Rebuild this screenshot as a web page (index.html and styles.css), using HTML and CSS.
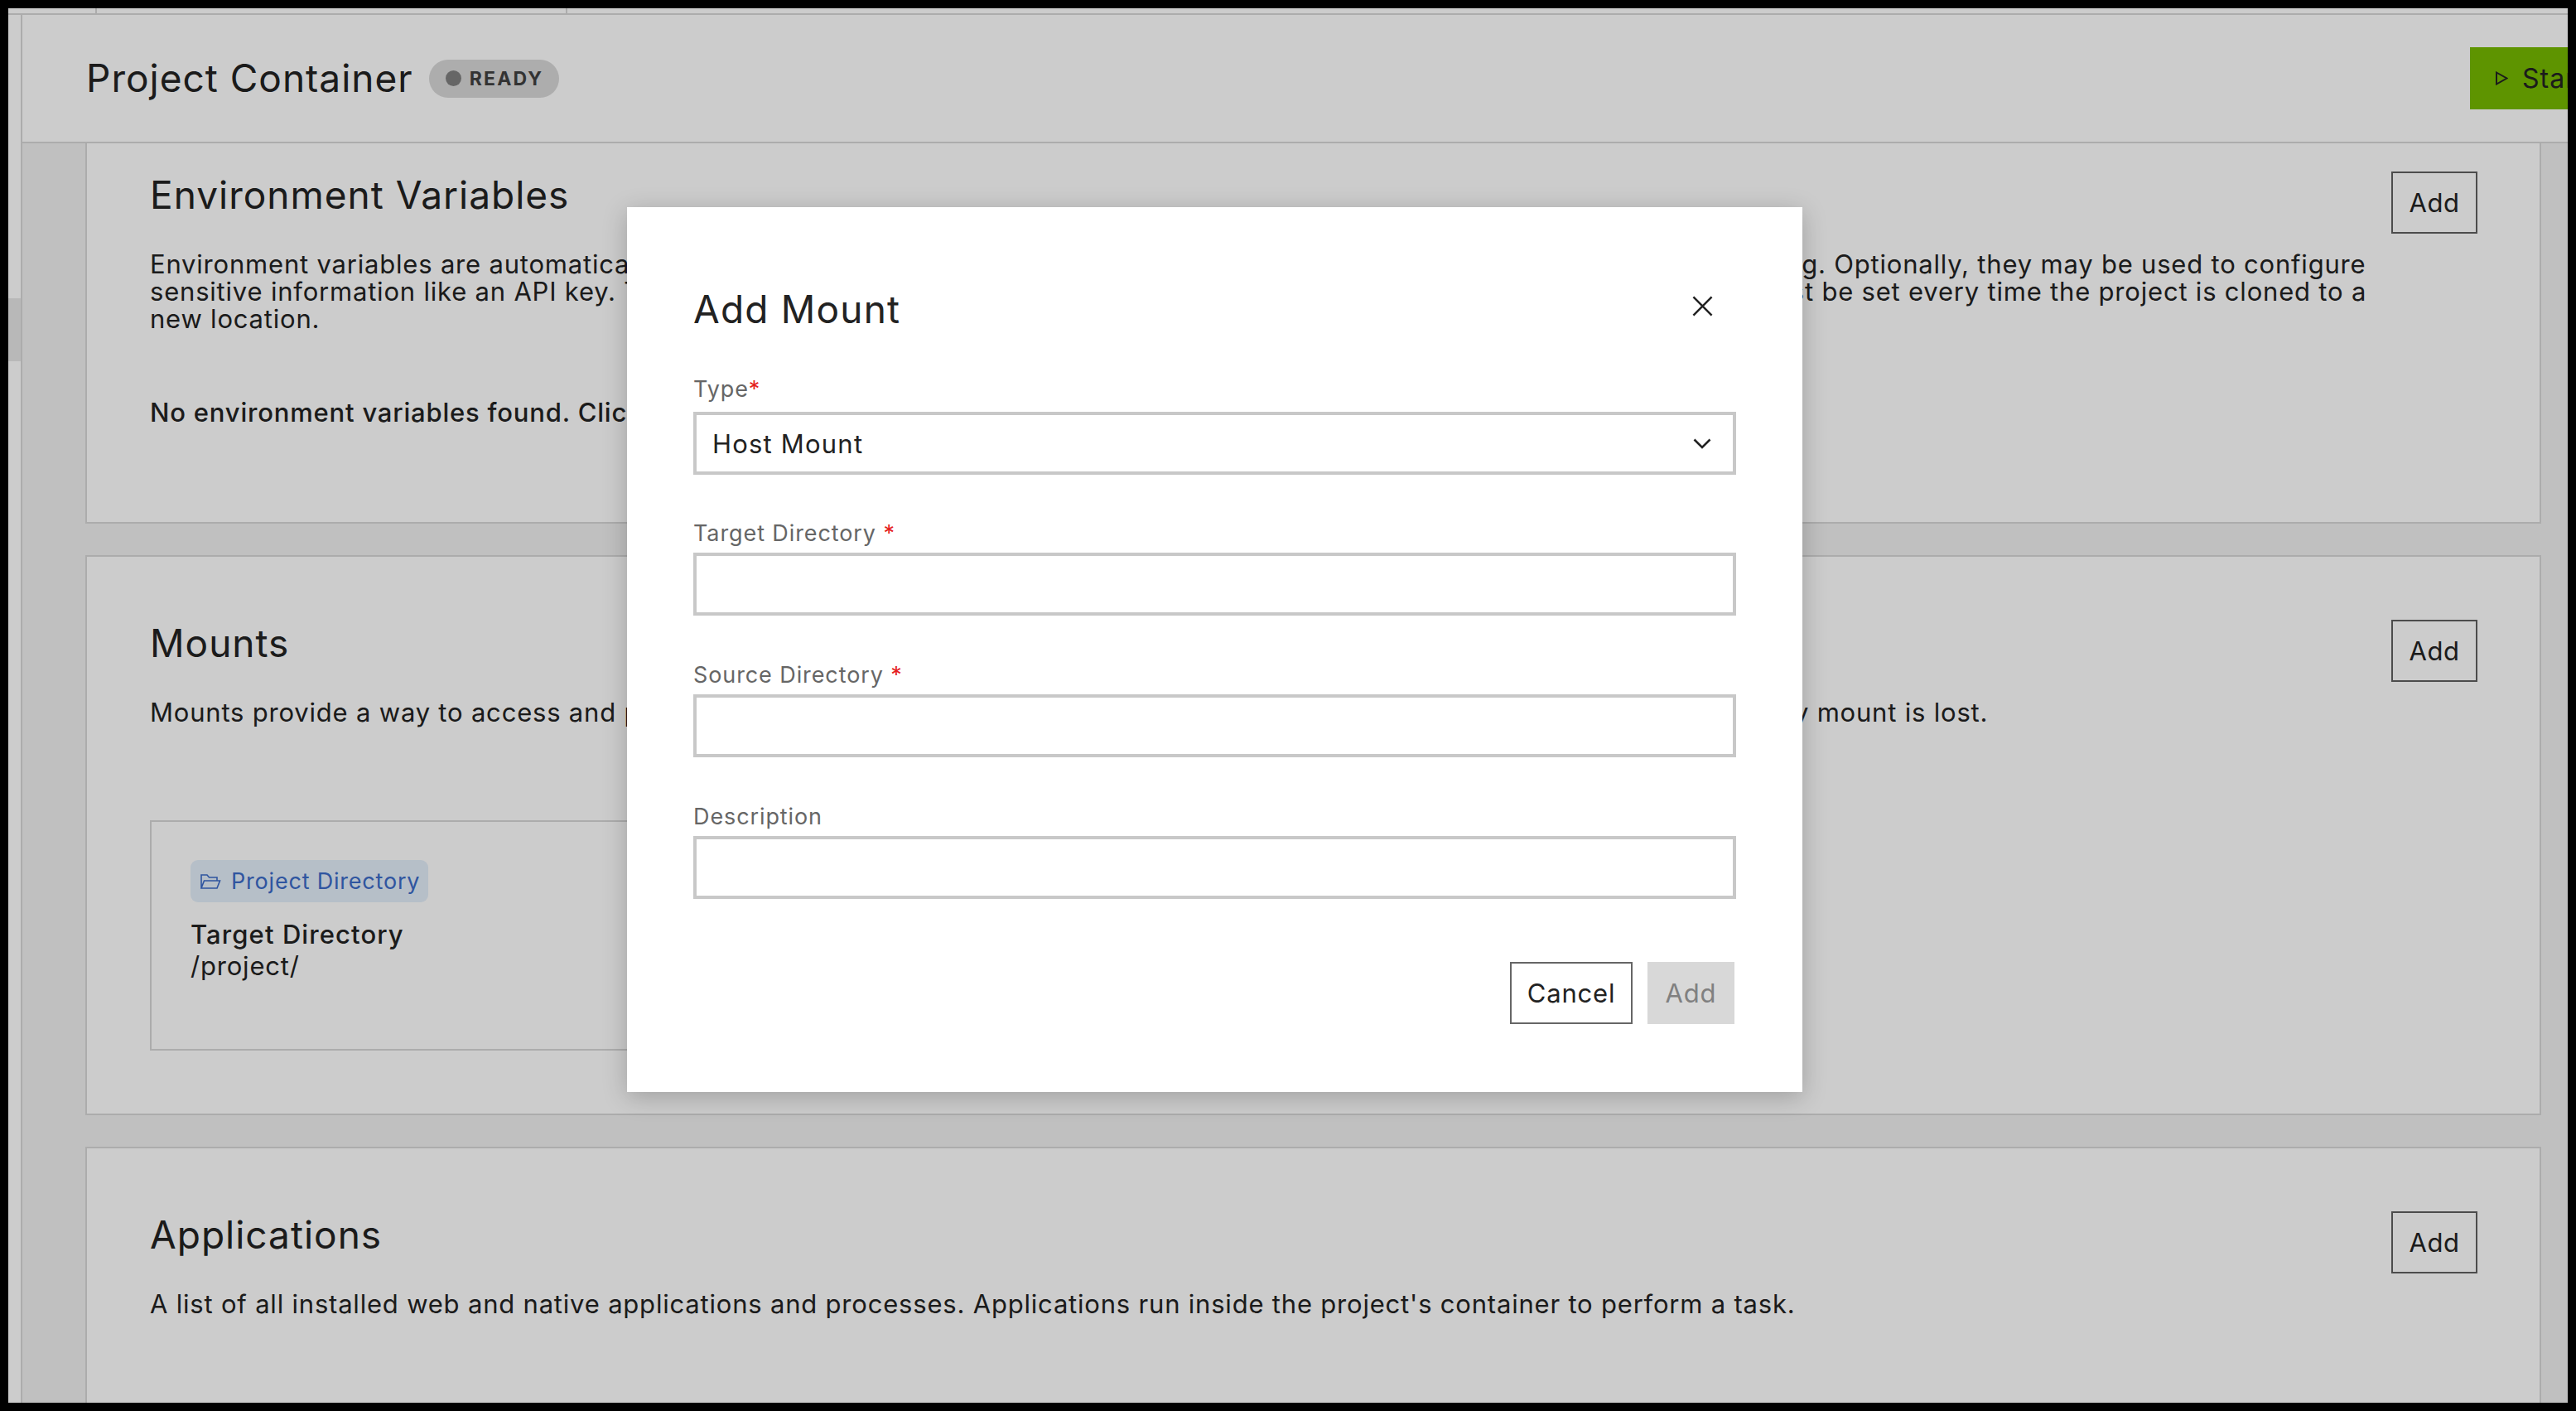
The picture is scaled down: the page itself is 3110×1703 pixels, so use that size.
FILE: index.html
```html
<!DOCTYPE html>
<html lang="en">
<head>
<meta charset="utf-8">
<title>Project Container</title>
<link rel="stylesheet" href="styles.css">
</head>
<body>
<div class="app">
  <div class="tabs"><span class="tab tab-a"></span><span class="tab tab-b"></span></div>
  <div class="shell">
    <aside class="rail"><span class="rail-mark"></span></aside>
    <main class="main">
      <header class="top">
        <h1 class="title">Project Container</h1>
        <span class="status"><i class="dot"></i>READY</span>
        <button class="start"><svg class="play" viewBox="0 0 15 17"><path d="M1 1.5 13.5 8.5 1 15.5Z"/></svg>Start</button>
      </header>
      <div class="scroll">
        <section class="card env">
          <div class="head">
            <div>
              <h2 class="h">Environment Variables</h2>
              <p class="p">Environment variables are automatically set as values in the project container environments each time that the container is starting. Optionally, they may be used to configure<br>sensitive information like an API key. These are stored in a protected location outside of the project repositories, so they also must be set every time the project is cloned to a<br>new location.</p>
              <p class="empty">No environment variables found. Click Add to create a new environment variable.</p>
            </div>
            <button class="add">Add</button>
          </div>
        </section>
        <section class="card mounts">
          <div class="head">
            <div>
              <h2 class="h">Mounts</h2>
              <p class="p">Mounts provide a way to access and persist any files and folders from outside of the project container. Data stored in a temporary mount is lost.</p>
            </div>
            <button class="add">Add</button>
          </div>
          <div class="mount">
            <span class="tag"><svg class="folder" viewBox="0 0 25 18"><path d="M1 17V1H8L10.5 4H20V8M1 17H20L23.5 8H4.5L1 17Z"/></svg>Project Directory</span>
            <div class="mt">Target Directory</div>
            <div class="mv">/project/</div>
          </div>
        </section>
        <section class="card apps">
          <div class="head">
            <div>
              <h2 class="h">Applications</h2>
              <p class="p">A list of all installed web and native applications and processes. Applications run inside the project's container to perform a task.</p>
            </div>
            <button class="add">Add</button>
          </div>
        </section>
      </div>
    </main>
  </div>
  <div class="backdrop"></div>
  <div class="modal">
    <div class="m-head">
      <h2 class="m-title">Add Mount</h2>
      <svg class="close" viewBox="0 0 26 26"><path d="M1.5 1.5 24.5 24.5M24.5 1.5 1.5 24.5"/></svg>
    </div>
    <div class="field f-type">
      <label class="lab">Type<em>*</em></label>
      <div class="box select">Host Mount<svg class="chev" viewBox="0 0 22 13"><path d="M1.5 1.5 11 11 20.5 1.5"/></svg></div>
    </div>
    <div class="field f-target">
      <label class="lab">Target Directory <em>*</em></label>
      <div class="box"></div>
    </div>
    <div class="field f-source">
      <label class="lab">Source Directory <em>*</em></label>
      <div class="box"></div>
    </div>
    <div class="field f-desc">
      <label class="lab">Description</label>
      <div class="box"></div>
    </div>
    <div class="actions">
      <button class="cancel">Cancel</button>
      <button class="confirm">Add</button>
    </div>
  </div>
</div>
</body>
</html>
```
FILE: styles.css
```css
* { box-sizing: border-box; }
html, body { margin: 0; height: 100%; }
body { background: #000; padding: 10px; overflow: hidden; font-family: Inter, "Liberation Sans", sans-serif; color: #222; }
.app { position: relative; width: 3090px; height: 1683px; background: #fff; overflow: hidden; display: flex; flex-direction: column; }
.tabs { height: 8px; flex: none; border-bottom: 2px solid #d8d8d8; display: flex; }
.tab { height: 6px; border-right: 2px solid #d8d8d8; }
.tab-a { width: 107px; }
.tab-b { width: 568px; }
.shell { flex: 1; display: flex; min-height: 0; }
.rail { width: 17px; flex: none; border-right: 2px solid #d8d8d8; padding-top: 342px; }
.rail-mark { display: block; height: 76px; background: #e6e6e6; }
.main { flex: 1; min-width: 0; display: flex; flex-direction: column; }
.top { height: 155px; flex: none; border-bottom: 2px solid #d8d8d8; display: flex; align-items: center; padding-left: 77px; }
.title { margin: -2px 0 0; font-size: 46px; line-height: 56px; font-weight: 400; letter-spacing: 1px; }
.status { margin-left: 19px; height: 46px; width: 157px; border-radius: 23px; background: #d9d9d9; color: #404040; display: flex; align-items: center; padding-left: 20px; gap: 10px; font-size: 23px; font-weight: 700; letter-spacing: 2.2px; }
.dot { width: 19px; height: 19px; border-radius: 50%; background: #808080; }
.start { margin-left: auto; margin-right: -19px; height: 75px; width: 137px; flex: none; border: 0; background: #76b900; color: #222; font: 400 32px Inter, sans-serif; letter-spacing: 1px; display: flex; align-items: center; padding-left: 31px; gap: 17px; white-space: nowrap; overflow: hidden; }
.play { width: 15px; height: 17px; flex: none; fill: none; stroke: #222; stroke-width: 2; }
.scroll { flex: 1; min-height: 0; overflow: hidden; background: #f0f0f0; padding: 0 32px 0 76px; }
.card { background: #fff; border: 2px solid #d8d8d8; padding: 76px 75px 0 76px; margin-bottom: 38px; }
.env { height: 459px; border-top: 0; padding-top: 34px; }
.mounts { height: 676px; }
.apps { height: 400px; }
.head { display: flex; justify-content: space-between; align-items: flex-start; }
.h { margin: 0; font-size: 46px; line-height: 56px; font-weight: 400; letter-spacing: 1px; }
.p { margin: 39px 0 0; font-size: 31px; line-height: 33px; letter-spacing: .8px; }
.empty { margin: 80px 0 0; font-size: 31px; line-height: 33px; font-weight: 500; letter-spacing: .8px; white-space: nowrap; }
.add { width: 104px; height: 75px; flex: none; background: transparent; border: 2px solid #5f5f5f; color: #222; font: 400 31px Inter, sans-serif; letter-spacing: .6px; padding: 0; }
.mount { margin-top: 114px; width: 1320px; height: 278px; border: 2px solid #d8d8d8; padding: 46px 46px 46px 47px; }
.tag { display: inline-flex; align-items: center; height: 51px; padding: 0 10px 0 12px; gap: 12px; background: #e4effb; border-radius: 9px; color: #3b6bc8; font-size: 27px; letter-spacing: .8px; }
.folder { width: 25px; height: 18px; fill: none; stroke: #3b6bc8; stroke-width: 1.6; }
.mt { margin-top: 20px; font-size: 31px; line-height: 38px; font-weight: 500; letter-spacing: 1.1px; }
.mv { font-size: 31px; line-height: 38px; letter-spacing: .8px; }
.backdrop { position: absolute; inset: 0; background: rgba(0, 0, 0, .2); }
.modal { position: absolute; left: 747px; top: 240px; width: 1419px; height: 1068px; background: #fff; box-shadow: 0 6px 28px rgba(0, 0, 0, .22); padding: 0 80px; }
.m-head { display: flex; justify-content: space-between; align-items: center; height: 204px; padding-top: 41px; }
.m-title { margin: 0; font-size: 46px; line-height: 56px; font-weight: 400; letter-spacing: 1.2px; }
.close { width: 25px; height: 25px; margin: -6px 28px 0 0; fill: none; stroke: #222; stroke-width: 2.6; }
.field { display: flex; flex-direction: column; }
.lab { font-size: 27px; line-height: 32px; color: #666; letter-spacing: .9px; }
.lab em { font-style: normal; color: #e52020; }
.box { height: 76px; width: 1259px; border: 4px solid #c8c8c8; margin-top: 7px; }
.select { display: flex; align-items: center; justify-content: space-between; padding: 0 26px 0 19px; font-size: 31px; letter-spacing: 1.2px; margin-top: 11px; }
.chev { width: 22px; height: 13px; fill: none; stroke: #222; stroke-width: 2.6; }
.f-target { margin-top: 55px; }
.f-source, .f-desc { margin-top: 56px; }
.actions { display: flex; justify-content: flex-end; gap: 18px; margin-top: 76px; width: 1257px; }
.cancel, .confirm { height: 75px; font: 400 31px Inter, sans-serif; letter-spacing: .8px; padding: 0; }
.cancel { width: 148px; background: #fff; border: 2px solid #666; color: #222; }
.confirm { width: 105px; background: #d8d8d8; border: 0; color: #808080; }
```
